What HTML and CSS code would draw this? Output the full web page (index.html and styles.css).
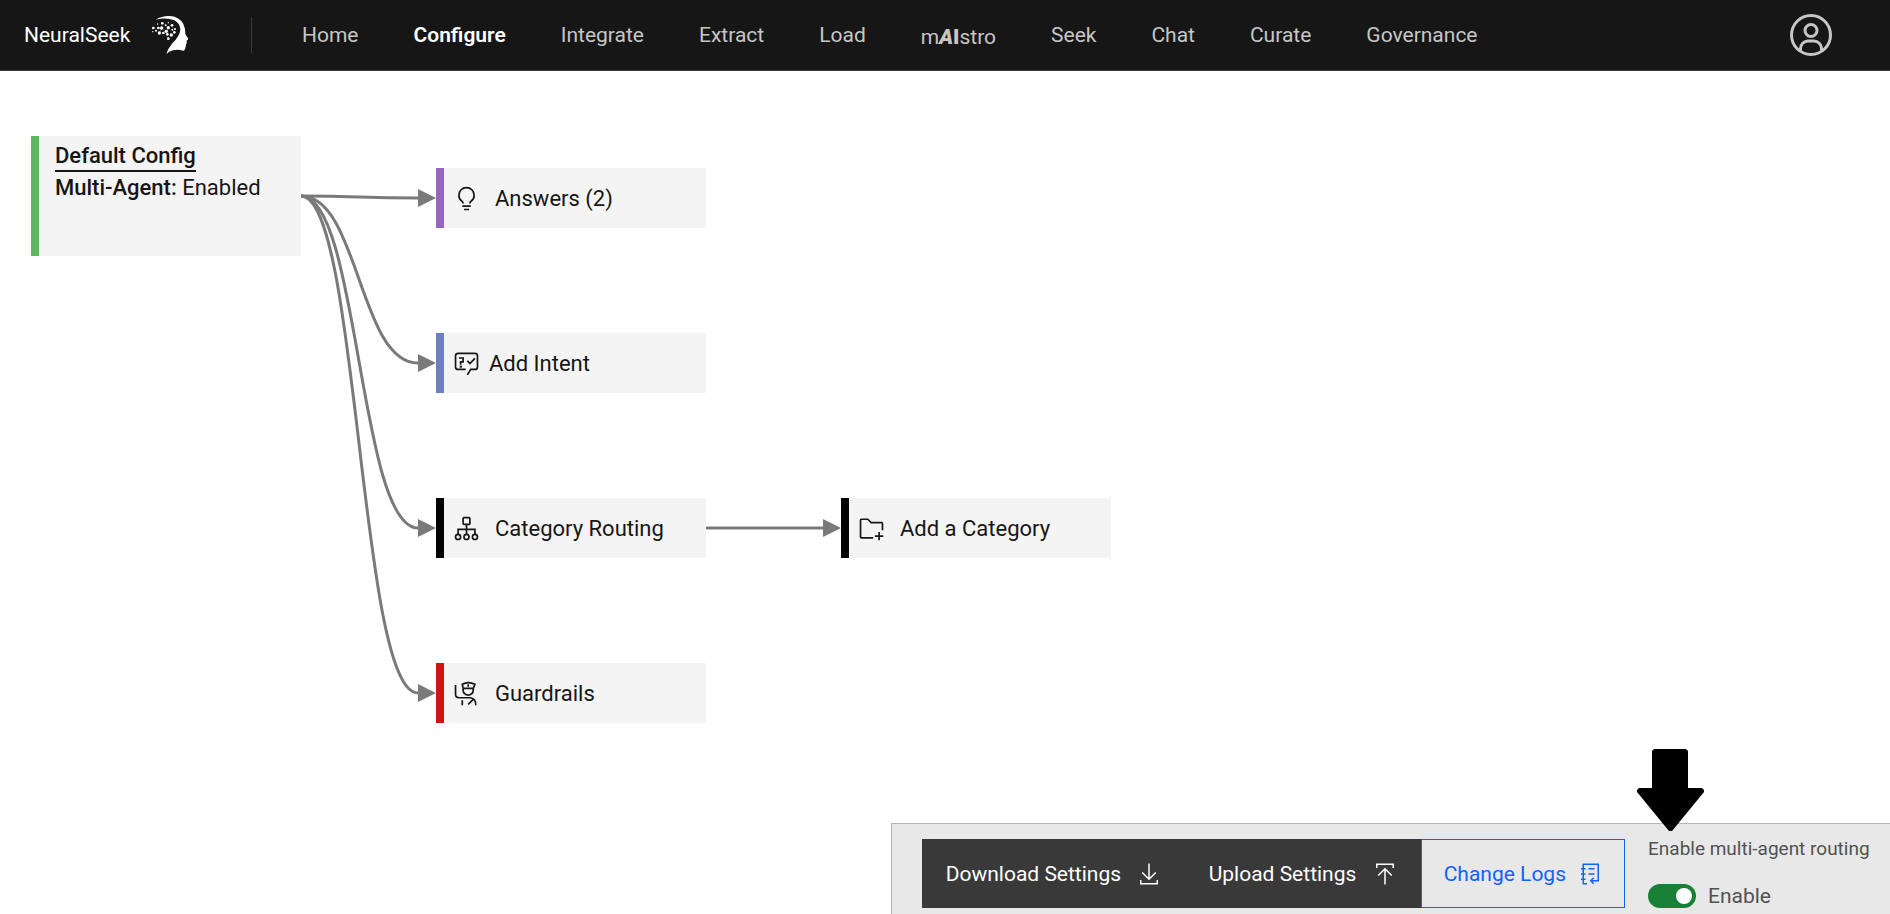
FILE: index.html
```html
<!DOCTYPE html>
<html lang="en">
<head>
<meta charset="utf-8">
<title>NeuralSeek</title>
<link rel="stylesheet" href="styles.css">
</head>
<body>
<header class="header">
  <a class="brand" href="#">NeuralSeek
    <svg class="brand-logo" viewBox="450 45 120 120" aria-hidden="true">
      <path d="M467 59Q486 47 508 48Q537 49 550 72Q556 84 556 102L565 117L560 122L560 130L558 134L557 140Q555 151 550 152Q534 147 519 151Q507 154 499 162Q503 147 517 130Q540 108 541 88Q540 70 523 61Q498 51 467 59Z"/>
      <circle cx="460" cy="84" r="4"/><circle cx="458" cy="95" r="2"/><circle cx="468" cy="92" r="3"/><circle cx="473" cy="72" r="2"/><circle cx="475" cy="84" r="4"/><circle cx="487" cy="70" r="4"/><circle cx="485" cy="84" r="5"/><circle cx="478" cy="99" r="5"/><circle cx="490" cy="99" r="4"/><circle cx="497" cy="76" r="3"/><circle cx="499" cy="94" r="5"/><circle cx="505" cy="83" r="5"/><circle cx="502" cy="103" r="4"/><circle cx="505" cy="68" r="2"/><circle cx="516" cy="76" r="4"/><circle cx="517" cy="89" r="3"/><circle cx="514" cy="105" r="5"/><circle cx="523" cy="97" r="4"/><circle cx="525" cy="87" r="3"/><circle cx="505" cy="116" r="4"/>
      <path class="links" d="M475 84L485 84L499 94L505 83M485 84L478 99M499 94L502 103"/>
    </svg>
  </a>
  <nav class="nav" aria-label="Main">
    <a href="#">Home</a>
    <a href="#" class="active" aria-current="page">Configure</a>
    <a href="#">Integrate</a>
    <a href="#">Extract</a>
    <a href="#">Load</a>
    <a href="#" class="maistro">m<b><i>A</i>I</b>stro</a>
    <a href="#">Seek</a>
    <a href="#">Chat</a>
    <a href="#">Curate</a>
    <a href="#">Governance</a>
  </nav>
  <button class="avatar" aria-label="Account">
    <svg viewBox="0 0 32 32"><circle cx="16" cy="16" r="13"/><circle cx="16" cy="13" r="4"/><path d="M9 26.500V25a5 5 0 015-5h4a5 5 0 015 5v1.500"/></svg>
  </button>
</header>

<main class="canvas">
  <svg class="edges" aria-hidden="true">
    <path class="edge" d="M301 124C359 124 359 126 418 126"/>
    <path class="edge" d="M301 124C359 124 359 291 418 291"/>
    <path class="edge" d="M301 124C359 124 359 456 418 456"/>
    <path class="edge" d="M301 124C359 124 359 621 418 621"/>
    <path class="edge" d="M706 456H824"/>
    <path class="head" d="M418 117l18 9-18 9zM418 282l18 9-18 9zM418 447l18 9-18 9zM418 612l18 9-18 9zM823 447l18 9-18 9z"/>
  </svg>

  <section class="node config">
    <a href="#">Default Config</a>
    <p><b>Multi-Agent:</b> Enabled</p>
  </section>

  <button class="node step answers">
    <svg class="icon solid" viewBox="0 0 32 32"><path d="M11 24H21V26H11zM13 28H19V30H13zM16 2A10 10 0 006 12a9.190 9.190 0 003.460 7.620c1 .93 1.540 1.460 1.540 2.380h2c0-1.840-1.110-2.870-2.190-3.860A7.200 7.200 0 018 12a8 8 0 0116 0 7.200 7.200 0 01-2.820 6.140c-1.070 1-2.180 2-2.180 3.860h2c0-.92.53-1.450 1.540-2.390A9.180 9.180 0 0026 12 10 10 0 0016 2z"/></svg>
    <span>Answers (2)</span>
  </button>
  <button class="node step intent">
    <svg class="icon" viewBox="0 0 32 32"><path d="M15 23H6a3 3 0 01-3-3V7a3 3 0 013-3h20a3 3 0 013 3v13a3 3 0 01-3 3h-5l-4 6.500M7 9.500h5v4.500H9v3.500M17 13l3 3 6-6"/><path class="dot" d="M8 18.500h2.500v2.500h-2.500z"/></svg>
    <span>Add Intent</span>
  </button>
  <button class="node step routing">
    <svg class="icon" viewBox="0 0 32 32"><rect x="12" y="3" width="8" height="8" rx="1"/><path d="M16 11v12M6 23v-6h20v6"/><circle cx="6" cy="26" r="3"/><circle cx="16" cy="26" r="3"/><circle cx="26" cy="26" r="3"/></svg>
    <span>Category Routing</span>
  </button>
  <button class="node step category">
    <svg class="icon solid" viewBox="0 0 32 32"><path d="M26 20H24v4H20v2h4v4h2V26h4V24H26zM28 8H16l-3.400-3.400A2 2 0 0011.170 4H4A2 2 0 002 6V26a2 2 0 002 2H18V26H4V6h7.170l3.410 3.410.59.59H28v8h2V10a2 2 0 00-2-2z"/></svg>
    <span>Add a Category</span>
  </button>
  <button class="node step guardrails">
    <svg class="icon" viewBox="0 0 32 32"><path d="M3 6v11q0 4 4 4h14q6 1 6 9M11 24v6M18 29l6-6M12 10v2a6 6 0 0012 0v-2M11 5q7-4 15 0l-2 5H12zM18 5v3"/></svg>
    <span>Guardrails</span>
  </button>
</main>

<footer class="toolbar">
  <div class="actions">
    <button class="action download">Download Settings
      <svg viewBox="0 0 32 32"><path d="M5 24v5h22v-5M16 2v21M7 14l9 9 9-9"/></svg>
    </button>
    <button class="action upload">Upload Settings
      <svg viewBox="0 0 32 32"><path d="M5 8V3h22v5M16 30V9M7 18l9-9 9 9"/></svg>
    </button>
    <button class="action outline">Change Logs
      <svg viewBox="0 0 32 32"><path d="M12 29H7V3h20v16M4 9h6M4 16h6M4 23h6M14 9h8M14 16h8M27 19v6H17M21 21l-4 4 4 4"/></svg>
    </button>
  </div>
  <div class="routing-toggle">
    <label class="toggle-title" for="multi-agent">Enable multi-agent routing</label>
    <div class="toggle-row">
      <input class="switch" type="checkbox" role="switch" id="multi-agent" checked>
      <span>Enable</span>
    </div>
    <svg class="pointer" viewBox="0 0 67 83" aria-hidden="true"><path d="M17 0H49L51 2V39H65L67 41V43L35 82H32L0 43V41L2 39H15V2Z"/></svg>
  </div>
</footer>
</body>
</html>
```

FILE: styles.css
```css
* { box-sizing: border-box; }

body {
  margin: 0;
  min-height: 100vh;
  display: flex;
  flex-direction: column;
  background: #fff;
  color: #161616;
  font: 21px/32px Roboto, "Liberation Sans", sans-serif;
  overflow: hidden;
}

a { color: inherit; text-decoration: none; }

button {
  font: inherit;
  color: inherit;
  border: 0;
  background: none;
  cursor: pointer;
}

b { font-weight: 500; }

svg { fill: none; stroke: currentColor; stroke-width: 2; flex: none; }

.header {
  display: flex;
  align-items: center;
  height: 71px;
  padding: 0 55px 0 24px;
  background: #161616;
  border-bottom: 1px solid #393939;
  color: #c6c6c6;
}

.brand {
  display: flex;
  align-items: center;
  gap: 20px;
  width: 228px;
  height: 36px;
  border-right: 1px solid #393939;
  color: #fff;
}

.brand-logo { width: 40px; height: 40px; fill: #fff; stroke: none; }
.links { stroke: #fff; fill: none; stroke-width: 1; }

.nav { display: flex; flex: 1; gap: 55px; padding: 2px 0 0 50px; }
.nav .active { color: #fff; font-weight: 600; }
.maistro { padding-top: 2px; }
.maistro b { font-weight: 900; }

.avatar { display: flex; padding: 0; }
.avatar svg { width: 48px; height: 48px; }

.canvas { position: relative; flex: 1; margin-top: 1px; }

.edges { position: absolute; inset: 0; width: 100%; height: 100%; }
.edge { stroke: #7a7a7a; stroke-width: 3; }
.head { fill: #7a7a7a; stroke: none; }

.node {
  position: absolute;
  width: 270px;
  background: #f4f4f4;
  border-left: 8px solid #000;
  font-size: 22px;
  text-align: left;
}

.config {
  left: 31px;
  top: 64px;
  height: 120px;
  padding: 4px 16px;
  border-color: #5cb85c;
}
.config a {
  display: inline-block;
  border-bottom: 2px solid #161616;
  font-weight: 500;
  line-height: 28px;
}
.config p { margin: 0; }

.step {
  display: flex;
  align-items: center;
  gap: 15px;
  height: 60px;
  padding: 2px 9px 0;
}
.icon { width: 27px; height: 27px; margin-bottom: 2px; }
.solid { fill: currentColor; stroke: none; }
.dot { fill: currentColor; stroke: none; }

.answers { left: 436px; top: 96px; border-color: #9467bd; }
.intent { left: 436px; top: 261px; gap: 9px; border-color: #6b80bd; }
.routing { left: 436px; top: 426px; }
.category { left: 841px; top: 426px; }
.guardrails { left: 436px; top: 591px; border-color: #d01414; }

.toolbar {
  display: flex;
  align-self: flex-end;
  align-items: flex-start;
  gap: 23px;
  padding: 15px 14px 2px 30px;
  background: #e8e8e8;
  border: 1px solid #b5b5b5;
  border-width: 1px 0 0 1px;
}

.actions { display: flex; background: #393939; }
.action {
  display: flex;
  align-items: center;
  justify-content: space-between;
  gap: 12px;
  height: 69px;
  padding: 0 24px;
  color: #fff;
}
.action svg { width: 24px; height: 24px; }
.download { min-width: 263px; }
.upload { min-width: 236px; }
.outline { padding: 0 22px; background: #e8e8e8; border: 1px solid #0f62fe; color: #0f62fe; }

.routing-toggle { position: relative; min-width: 228px; color: #525252; }
.toggle-title { display: block; font-size: 19px; line-height: 20px; }
.toggle-row { display: flex; align-items: center; gap: 12px; margin-top: 21px; height: 32px; }

.switch {
  appearance: none;
  display: flex;
  align-items: center;
  justify-content: flex-end;
  width: 48px;
  height: 24px;
  margin: 0;
  padding: 4px;
  border-radius: 12px;
  background: #198038;
}
.switch::before {
  content: "";
  width: 16px;
  height: 16px;
  border-radius: 50%;
  background: #fff;
}
.switch:not(:checked) { justify-content: flex-start; background: #8d8d8d; }

.pointer {
  position: absolute;
  left: -11px;
  top: -90px;
  width: 67px;
  height: 83px;
  fill: #000;
  stroke: none;
}
```
